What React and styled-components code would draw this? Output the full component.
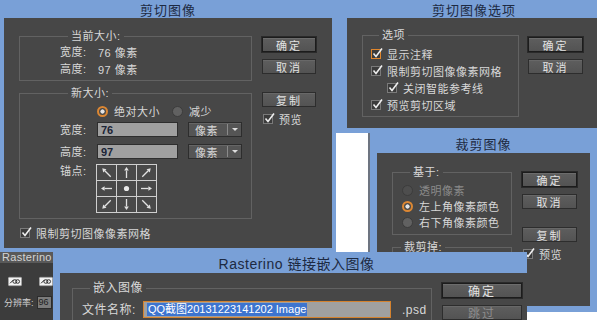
import React from "react";
import styled, { createGlobalStyle, css } from "styled-components";

const BLUE = "#79a0d7";
const PANEL = "#474747";
const TEXT = "#d8d8d8";

const GlobalStyle = createGlobalStyle`
  html, body {
    margin: 0;
    padding: 0;
    background: #ffffff;
  }
  body {
    font-family: "Liberation Sans", "Noto Sans CJK SC", sans-serif;
  }
`;

const Desktop = styled.div`
  position: relative;
  width: 597px;
  height: 320px;
  overflow: hidden;
  background: #ffffff;
`;

const Window = styled.div`
  position: absolute;
  left: ${(p) => p.$x}px;
  top: ${(p) => p.$y}px;
  width: ${(p) => p.$w}px;
  height: ${(p) => p.$h}px;
  box-sizing: border-box;
  display: flex;
  flex-direction: column;
  background: ${BLUE};
  padding: 0 ${(p) => p.$br ?? 4}px ${(p) => p.$bb ?? 4}px ${(p) => p.$bl ?? 4}px;
  border-left: ${(p) => (p.$edge ? "2px solid #6d7480" : "none")};
  overflow: hidden;
`;

const TitleBar = styled.div`
  flex: none;
  height: ${(p) => p.$h}px;
  display: flex;
  align-items: center;
  justify-content: ${(p) => (p.$left ? "flex-start" : "center")};
  padding-left: ${(p) => p.$pl || 0}px;
  font-size: ${(p) => p.$size || 13}px;
  letter-spacing: ${(p) => (p.$size ? 0.5 : 1)}px;
  color: #1d2a42;
  white-space: nowrap;
`;

const Body = styled.div`
  flex: 1;
  min-height: 0;
  box-sizing: border-box;
  background: ${PANEL};
  display: flex;
  align-items: flex-start;
  gap: ${(p) => p.$gap}px;
  padding: ${(p) => p.$pt}px 0 0 ${(p) => p.$pl}px;
`;

const Column = styled.div`
  flex: none;
  width: ${(p) => p.$w}px;
  display: flex;
  flex-direction: column;
`;

const Group = styled.fieldset`
  margin: ${(p) => p.$mt || 0}px 0 0;
  padding: ${(p) => p.$pt || 0}px 0 ${(p) => p.$pb || 0}px ${(p) => p.$pl || 0}px;
  border: 1px solid #626262;
  min-width: 0;
  display: flex;
  flex-direction: column;
`;

const Legend = styled.legend`
  margin-left: 8px;
  padding: 0 3px;
  font-size: ${(p) => p.$size || 11}px;
  line-height: 14px;
  letter-spacing: 0.5px;
  color: ${TEXT};
`;

const Row = styled.div`
  display: flex;
  align-items: ${(p) => (p.$top ? "flex-start" : "center")};
  height: ${(p) => p.$h || 17}px;
  margin-top: ${(p) => p.$mt || 0}px;
  padding-left: ${(p) => p.$pl || 0}px;
  font-size: ${(p) => p.$size || 11}px;
  letter-spacing: 0.5px;
  color: ${(p) => (p.$dim ? "#8a8a8a" : TEXT)};
  white-space: nowrap;
`;

const Label = styled.span`
  flex: none;
  width: ${(p) => p.$w}px;
  margin-right: ${(p) => p.$mr}px;
  line-height: 14px;
`;

const Gap = styled.span`
  display: inline-block;
  width: ${(p) => p.$w}px;
`;

const Button = styled.div`
  width: ${(p) => p.$w || 54}px;
  height: 15px;
  box-sizing: border-box;
  margin-top: ${(p) => p.$mt || 0}px;
  display: flex;
  align-items: center;
  justify-content: center;
  background: linear-gradient(#5e5e5e, #535353);
  border: 1px solid ${(p) => (p.$primary ? "#1c1c1c" : "#2d2d2d")};
  box-shadow: ${(p) =>
    p.$primary ? "0 0 0 1px #2a2a2a, inset 0 1px 0 #6c6c6c" : "inset 0 1px 0 #686868"};
  color: ${(p) => (p.$disabled ? "#8d8d8d" : "#e2e2e2")};
  font-size: ${(p) => p.$size || 11}px;
  letter-spacing: 2px;
`;

const Box = styled.span`
  position: relative;
  flex: none;
  width: 10px;
  height: 10px;
  box-sizing: border-box;
  margin-right: 6px;
  border: 1px solid ${(p) => (p.$focus ? "#e0862c" : "#7a7a7a")};
  background: #3b3b3b;

  svg {
    position: absolute;
    left: 0;
    top: -3px;
  }
`;

const Check = ({ focus }) => (
  <Box $focus={focus}>
    <svg width="12" height="12" viewBox="0 0 12 12">
      <path d="M1.5 6.5 L4 9.5 L10 1.5" fill="none" stroke="#eeeeee" strokeWidth="1.6" />
    </svg>
  </Box>
);

const Radio = styled.span`
  flex: none;
  width: 11px;
  height: 11px;
  box-sizing: border-box;
  border-radius: 50%;
  margin-right: 6px;
  ${(p) =>
    p.$on
      ? css`
          border: 2px solid #dc8733;
          background: radial-gradient(circle, #e4e4e4 0 1.8px, #4a4a4a 2.4px);
        `
      : css`
          border: 1px solid #3c3c3c;
          background: ${p.$dim ? "#4e4e4e" : "#616161"};
        `}
`;

const Field = styled.div`
  flex: none;
  width: ${(p) => p.$w}px;
  height: ${(p) => p.$h || 15}px;
  box-sizing: border-box;
  display: flex;
  align-items: center;
  padding-left: 3px;
  background: #a0a0a0;
  border: 1px solid ${(p) => (p.$focus ? "#d4822e" : "#2e2e2e")};
  color: #1b2436;
  font-weight: bold;
  font-size: 11px;
  letter-spacing: 0;
`;

const Selected = styled.span`
  background: #3d74cf;
  color: #ffffff;
  font-weight: normal;
  padding: 0 1px;
  line-height: 13px;
`;

const Select = styled.div`
  flex: none;
  width: 54px;
  height: 15px;
  box-sizing: border-box;
  margin-left: 10px;
  display: flex;
  align-items: center;
  background: #555555;
  border: 1px solid #2d2d2d;
  box-shadow: inset 0 1px 0 #666;
  color: ${TEXT};
`;

const SelectText = styled.span`
  flex: 1;
  padding-left: 6px;
`;

const Caret = styled.span`
  width: 13px;
  height: 11px;
  border-left: 1px solid #8a8a8a;
  display: flex;
  align-items: center;
  justify-content: center;

  &::after {
    content: "";
    border: 3px solid transparent;
    border-top: 3px solid #dddddd;
    margin-top: 3px;
  }
`;

const Anchor = styled.div`
  display: grid;
  grid-template-columns: repeat(3, 19px);
  grid-template-rows: repeat(3, 15px);
  gap: 1px;
  padding: 1px;
  background: #cfcfcf;
`;

const Cell = styled.div`
  background: #494949;
  display: flex;
`;

const Filler = styled.div`
  height: ${(p) => p.$h}px;
`;

const Suffix = styled.span`
  margin-left: 11px;
  font-size: 12px;
  color: ${TEXT};
`;

const Panel = styled.div`
  position: absolute;
  left: 0;
  top: 252px;
  width: 53px;
  height: 68px;
  display: flex;
  flex-direction: column;
  background: #3c3c3c;
  overflow: hidden;
`;

const PanelHead = styled.div`
  height: 11px;
  padding-left: 2px;
  background: #595959;
  color: #d4d4d4;
  font-size: 11px;
  line-height: 11px;
  letter-spacing: 0.3px;
`;

const IconRow = styled.div`
  display: flex;
  gap: 17px;
  padding: 12px 0 0 8px;
`;

const ResRow = styled.div`
  display: flex;
  align-items: center;
  margin-top: 8px;
  padding-left: 4px;
  font-size: 9px;
  color: #cfcfcf;
  white-space: nowrap;
`;

const ResBox = styled.span`
  margin-left: 3px;
  padding-left: 1px;
  height: 11px;
  width: 12px;
  background: #7b7b7b;
  border: 1px solid #2c2c2c;
  color: #1e1e1e;
  font-size: 9px;
  line-height: 11px;
`;

const dirs = [
  [-1, -1], [0, -1], [1, -1],
  [-1, 0], null, [1, 0],
  [-1, 1], [0, 1], [1, 1],
];

const Arrow = ({ d }) => {
  if (!d) {
    return (
      <svg width="19" height="15">
        <circle cx="9.5" cy="7.5" r="2.6" fill="#e8e8e8" />
      </svg>
    );
  }
  const len = Math.hypot(d[0], d[1]);
  const ux = d[0] / len;
  const uy = d[1] / len;
  const r = d[0] && d[1] ? 6 : 5.5;
  const tx = 9.5 + ux * r;
  const ty = 7.5 + uy * r;
  const bx = tx - ux * 3.6;
  const by = ty - uy * 3.6;
  const nx = -uy * 2.3;
  const ny = ux * 2.3;
  return (
    <svg width="19" height="15">
      <line x1={9.5 - ux * r} y1={7.5 - uy * r} x2={bx} y2={by} stroke="#e2e2e2" strokeWidth="1.3" />
      <polygon points={`${tx},${ty} ${bx + nx},${by + ny} ${bx - nx},${by - ny}`} fill="#e2e2e2" />
    </svg>
  );
};

const LinkIcon = () => (
  <svg width="20" height="13" viewBox="0 0 20 13">
    <rect x="0.5" y="0.5" width="19" height="12" rx="1.5" fill="#f2f2f2" stroke="#9a9a9a" />
    <path d="M3 9 L8 4" stroke="#222" strokeWidth="1.4" />
    <rect x="7" y="4" width="5.5" height="5" rx="2.5" fill="none" stroke="#222" strokeWidth="1.3" />
    <rect x="11" y="4" width="5.5" height="5" rx="2.5" fill="none" stroke="#222" strokeWidth="1.3" />
  </svg>
);

const App = () => (
  <Desktop>
    <GlobalStyle />

    <Window $x={0} $y={0} $w={336} $h={252}>
      <TitleBar $h={18}>剪切图像</TitleBar>
      <Body $pt={11} $pl={15} $gap={10}>
        <Column $w={233}>
          <Group $pl={40} $pb={3}>
            <Legend>当前大小:</Legend>
            <Row>
              <Label $w={28} $mr={10}>宽度:</Label>76 像素
            </Row>
            <Row>
              <Label $w={28} $mr={10}>高度:</Label>97 像素
            </Row>
          </Group>
          <Group $mt={5} $pl={40} $pb={5}>
            <Legend>新大小:</Legend>
            <Row $mt={3} $h={16}>
              <Label $w={28} $mr={9} />
              <Radio $on />绝对大小<Gap $w={12} />
              <Radio />减少
            </Row>
            <Row $mt={3} $h={15}>
              <Label $w={28} $mr={9}>宽度:</Label>
              <Field $w={81}>76</Field>
              <Select>
                <SelectText>像素</SelectText>
                <Caret />
              </Select>
            </Row>
            <Row $mt={7} $h={15}>
              <Label $w={28} $mr={9}>高度:</Label>
              <Field $w={81}>97</Field>
              <Select>
                <SelectText>像素</SelectText>
                <Caret />
              </Select>
            </Row>
            <Row $mt={5} $h={49} $top>
              <Label $w={28} $mr={8}>锚点:</Label>
              <Anchor>
                {dirs.map((d, i) => (
                  <Cell key={i}>
                    <Arrow d={d} />
                  </Cell>
                ))}
              </Anchor>
            </Row>
          </Group>
          <Row $mt={7} $h={14} $pl={1}>
            <Check />限制剪切图像像素网格
          </Row>
        </Column>
        <Column $w={54}>
          <Button $primary $mt={8}>确定</Button>
          <Button $mt={7}>取消</Button>
          <Button $mt={18}>复制</Button>
          <Row $mt={5} $h={14} $pl={1}>
            <Check />预览
          </Row>
        </Column>
      </Body>
    </Window>

    <Window $x={336} $y={0} $w={261} $h={133} $bl={11} $br={0} $bb={5}>
      <TitleBar $h={18} $left $pl={85}>剪切图像选项</TitleBar>
      <Body $pt={10} $pl={15} $gap={9}>
        <Column $w={157}>
          <Group $pt={3} $pb={3} $pl={8}>
            <Legend>选项</Legend>
            <Row>
              <Check focus />显示注释
            </Row>
            <Row>
              <Check />限制剪切图像像素网格
            </Row>
            <Row $pl={16}>
              <Check />关闭智能参考线
            </Row>
            <Row>
              <Check />预览剪切区域
            </Row>
          </Group>
        </Column>
        <Column $w={55}>
          <Button $w={55} $primary $mt={9}>确定</Button>
          <Button $w={55} $mt={7}>取消</Button>
        </Column>
      </Body>
    </Window>

    <Window $x={368} $y={133} $w={229} $h={179} $edge $bl={7} $br={7} $bb={6}>
      <TitleBar $h={20}>裁剪图像</TitleBar>
      <Body $pt={12} $pl={15} $gap={10}>
        <Column $w={120}>
          <Group $pt={3} $pb={4} $pl={9}>
            <Legend>基于:</Legend>
            <Row $h={16} $dim>
              <Radio $dim />透明像素
            </Row>
            <Row $h={16}>
              <Radio $on />左上角像素颜色
            </Row>
            <Row $h={16}>
              <Radio />右下角像素颜色
            </Row>
          </Group>
          <Group $mt={5}>
            <Legend>裁剪掉:</Legend>
            <Filler $h={60} />
          </Group>
        </Column>
        <Column $w={55}>
          <Button $w={55} $primary $mt={7}>确定</Button>
          <Button $w={55} $mt={7}>取消</Button>
          <Button $w={55} $mt={18}>复制</Button>
          <Row $mt={5} $h={14} $pl={1}>
            <Check />预览
          </Row>
        </Column>
      </Body>
    </Window>

    <Panel>
      <PanelHead>Rasterino</PanelHead>
      <IconRow>
        <LinkIcon />
        <LinkIcon />
      </IconRow>
      <ResRow>
        分辨率:<ResBox>96</ResBox>
      </ResRow>
    </Panel>

    <Window $x={53} $y={252} $w={474} $h={80} $bl={7} $br={0} $bb={0}>
      <TitleBar $h={21} $size={14} $pl={6}>Rasterino 链接嵌入图像</TitleBar>
      <Body $pt={8} $pl={12} $gap={10}>
        <Column $w={360}>
          <Group $pl={9}>
            <Legend $size={12}>嵌入图像</Legend>
            <Row $mt={6} $h={17} $size={12}>
              <Label $w={53} $mr={8}>文件名称:</Label>
              <Field $w={248} $h={17} $focus>
                <Selected>QQ截图20131223141202 Image</Selected>
              </Field>
              <Suffix>.psd</Suffix>
            </Row>
            <Filler $h={20} />
          </Group>
        </Column>
        <Column $w={80}>
          <Button $w={80} $primary $mt={2} $size={12}>确定</Button>
          <Button $w={80} $mt={7} $size={12} $disabled>跳过</Button>
        </Column>
      </Body>
    </Window>
  </Desktop>
);

export default App;
